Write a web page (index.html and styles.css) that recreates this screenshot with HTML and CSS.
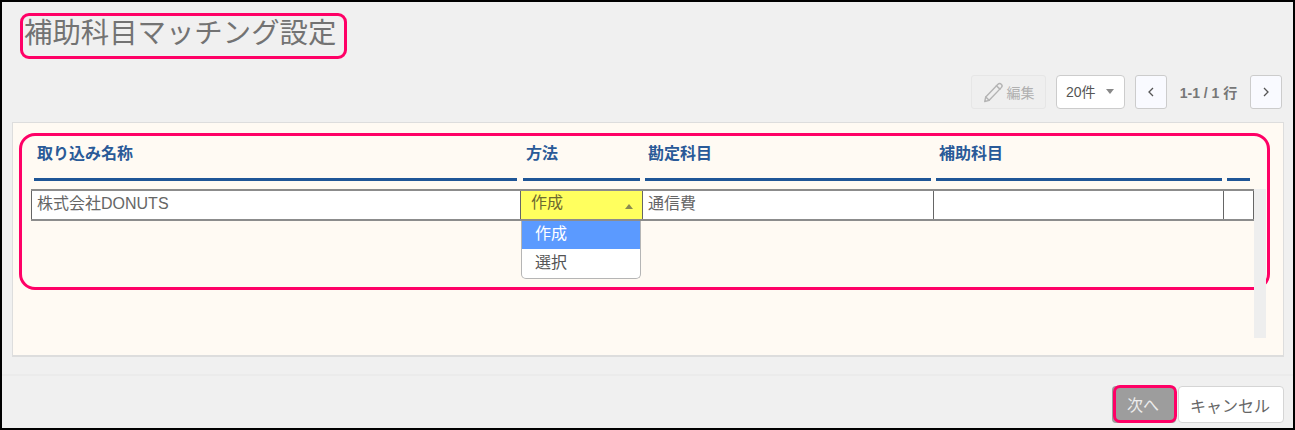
FILE: index.html
```html
<!DOCTYPE html>
<html lang="ja">
<head>
    <meta charset="UTF-8">
    <title>補助科目マッチング設定</title>
    <link rel="stylesheet" href="styles.css">
</head>
<body>
    <div class="frame">
        <header class="page-head">
            <h1 class="page-title">補助科目マッチング設定</h1>
            <span class="mark mark-title"></span>
        </header>
        <div class="toolbar">
            <button class="btn-edit">
                <svg width="22" height="22" viewBox="0 0 20 20" fill="none" stroke="#b4b4b4" stroke-width="1.3" stroke-linejoin="round" stroke-linecap="round">
                    <path d="M2.5 14.5 L13.6 2.9 a2 2 0 0 1 3 0 a2.1 2.1 0 0 1 .2 2.9 L5.6 17.6 L1.6 18.6 Z"/>
                    <path d="M2.5 14.5 L5.6 17.6"/>
                    <path d="M12.2 4.4 L15.4 7.4"/>
                </svg>
                編集
            </button>
            <div class="per-page">20件<span class="caret-down"></span></div>
            <button class="btn-page btn-prev">
                <svg width="8" height="10" viewBox="0 0 8 10" fill="none" stroke="#555" stroke-width="1.3"><path d="M6 1 L2 5 L6 9"/></svg>
            </button>
            <span class="page-info">1-1 / 1 行</span>
            <button class="btn-page">
                <svg width="8" height="10" viewBox="0 0 8 10" fill="none" stroke="#555" stroke-width="1.3"><path d="M2 1 L6 5 L2 9"/></svg>
            </button>
        </div>
        <section class="panel">
            <span class="mark mark-table"></span>
            <div class="col-heads">
                <div class="col-head col-name">取り込み名称</div>
                <div class="col-head col-method">方法</div>
                <div class="col-head col-account">勘定科目</div>
                <div class="col-head col-sub">補助科目</div>
                <div class="col-head col-end"></div>
            </div>
            <div class="table-body">
                <div class="row">
                    <div class="cell cell-name">株式会社DONUTS</div>
                    <div class="cell cell-method">
                        <div class="method-value">作成<span class="caret-up"></span></div>
                        <ul class="method-menu">
                            <li class="active">作成</li>
                            <li>選択</li>
                        </ul>
                    </div>
                    <div class="cell cell-account">通信費</div>
                    <div class="cell cell-sub"></div>
                    <div class="cell cell-end"></div>
                </div>
                <div class="scroll-strip"></div>
            </div>
        </section>
        <footer class="page-foot">
            <button class="btn-next">次へ<span class="mark mark-next"></span></button>
            <button class="btn-cancel">キャンセル</button>
        </footer>
    </div>
</body>
</html>
```

FILE: styles.css
```css
* { box-sizing: border-box; }
body { margin: 0; background-color: #000; font-family: "Liberation Sans", "Noto Sans CJK JP", sans-serif; color: #666; }
button { font-family: inherit; }
.frame { width: 1291px; height: 426px; margin: 2px 2px 2px 2px; background-color: #f0f0f0; display: flex; flex-direction: column; }

.mark { position: absolute; border: 3px solid #ff0066; pointer-events: none; }

.page-head { position: relative; height: 73px; padding: 12px 0 0 22px; }
.page-title { margin: 0; font-size: 28.4px; line-height: 38px; font-weight: normal; color: #737373; }
.mark-title { left: 18px; top: 11px; width: 327px; height: 46px; border-radius: 9px; }

.toolbar { display: flex; align-items: center; justify-content: flex-end; height: 34px; padding-right: 11px; }
.btn-edit { display: flex; align-items: center; justify-content: center; gap: 2px; width: 75px; height: 34px; padding: 0; font-size: 14px; color: #b0b0b0; background-color: #efefef; border: 1px solid #e6e6e6; border-radius: 3px; }
.per-page { position: relative; width: 69px; height: 34px; margin-left: 10px; padding-left: 9px; font-size: 14px; line-height: 32px; color: #555; background-color: #fff; border: 1px solid #ccc; border-radius: 4px; }
.caret-down { position: absolute; right: 10px; top: 13px; border-left: 4px solid transparent; border-right: 4px solid transparent; border-top: 5px solid #888; }
.btn-page { display: flex; align-items: center; justify-content: center; width: 32px; height: 34px; padding: 0; background-color: #f9faff; border: 1px solid #ccc; border-radius: 3px; }
.btn-prev { margin-left: 10px; }
.page-info { width: 83px; text-align: center; font-size: 14px; font-weight: bold; color: #777; }

.panel { position: relative; height: 235px; margin: 13px 9px 0 10px; padding-top: 9px; background-color: #fffaf3; border: 1px solid #ddd; border-bottom-width: 2px; }
.mark-table { left: 6px; top: 10px; width: 1251px; height: 157px; border-radius: 16px; }

.col-heads { display: flex; gap: 5px; height: 49px; margin-left: 21px; }
.col-head { height: 49px; padding: 12px 0 0 3px; font-size: 16px; line-height: 20px; font-weight: bold; color: #2a5a98; border-bottom: 3px solid #1f5596; }
.col-name { width: 483px; margin-right: 1px; }
.col-method { width: 117px; }
.col-account { width: 286px; }
.col-sub { width: 286px; }
.col-end { width: 23px; }

.table-body { position: relative; display: flex; margin: 8px 0 0 18px; }
.row { display: flex; width: 1223px; height: 32px; background-color: #fff; border-top: 2px solid #8c8c8c; border-bottom: 2px solid #8c8c8c; }
.cell { height: 28px; padding: 0 5px; font-size: 16px; line-height: 26px; color: #666; border-left: 1px solid #666; }
.cell-name { width: 489px; }
.cell-method { position: relative; width: 122px; padding: 0; }
.cell-account { width: 291px; }
.cell-sub { width: 290px; }
.cell-end { width: 31px; border-right: 1px solid #666; }
.scroll-strip { width: 12px; height: 149px; background-color: #eeeeee; }

.method-value { position: relative; height: 28px; padding-left: 10px; line-height: 23px; color: #6d6a30; background-color: #ffff5e; }
.caret-up { position: absolute; right: 9px; top: 13px; border-left: 4px solid transparent; border-right: 4px solid transparent; border-bottom: 5px solid #8a8a50; }
.method-menu { position: absolute; left: 0; top: 30px; width: 120px; margin: 0; padding: 0; list-style: none; background-color: #fff; border: 1px solid #b5b5b5; border-top: 0; border-radius: 0 0 5px 5px; }
.method-menu li { height: 29px; padding-left: 13px; line-height: 27px; color: #555; }
.method-menu li.active { height: 28px; line-height: 26px; color: #fff; background-color: #5b9aff; }

.page-foot { display: flex; justify-content: flex-end; gap: 2px; height: 54px; margin-top: 17px; padding: 10px 9px 0 0; border-top: 2px solid #ebebeb; }
.btn-next { position: relative; width: 64px; height: 37px; padding: 0 2px 2px 0; font-size: 16px; color: #eee; background-color: #9d9d9d; border: 0; border-radius: 4px; }
.mark-next { left: 1px; top: -1px; width: 64px; height: 38px; border-radius: 7px; }
.btn-cancel { width: 106px; height: 37px; padding: 0 2px 0 0; font-size: 16px; color: #666; background-color: #fff; border: 1px solid #d5d5d5; border-radius: 4px; }
```
